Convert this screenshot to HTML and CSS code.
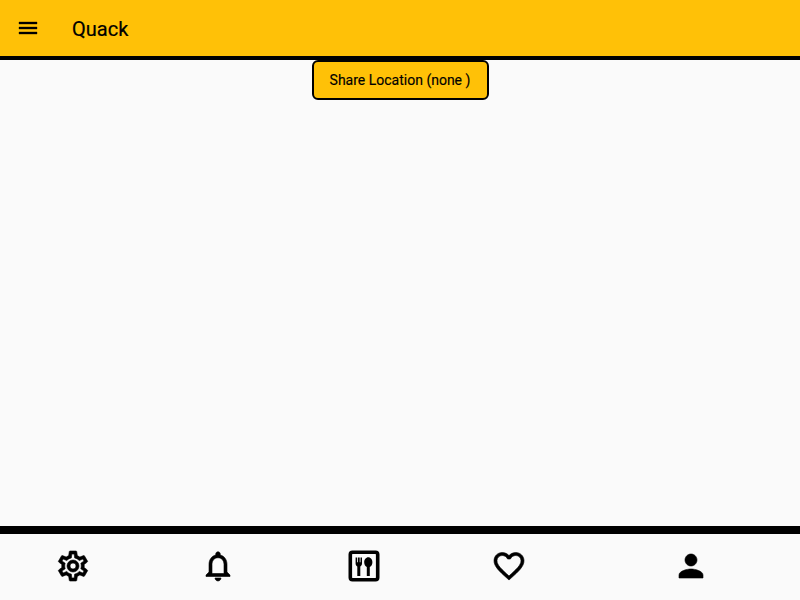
FILE: index.html
```
<!DOCTYPE html>
<html lang="en">
<head>
<meta charset="utf-8">
<title>Quack</title>
<link rel="stylesheet" href="styles.css">
</head>
<body>
<header class="toolbar">
  <svg class="menu" viewBox="0 0 24 24"><path d="M3 18h18v-2H3v2zm0-5h18v-2H3v2zm0-7v2h18V6H3z"/></svg>
  <h1 class="title">Quack</h1>
</header>
<main class="content">
  <button class="share">Share Location (none )</button>
</main>
<nav class="tabs">
  <a class="tab"><svg class="icon bold" viewBox="0 0 24 24"><path d="M12,8A4,4 0 0,1 16,12A4,4 0 0,1 12,16A4,4 0 0,1 8,12A4,4 0 0,1 12,8M12,10A2,2 0 0,0 10,12A2,2 0 0,0 12,14A2,2 0 0,0 14,12A2,2 0 0,0 12,10M10,22C9.75,22 9.54,21.82 9.5,21.58L9.13,18.93C8.5,18.68 7.96,18.34 7.44,17.94L4.95,18.95C4.73,19.03 4.46,18.95 4.34,18.73L2.34,15.27C2.21,15.05 2.27,14.78 2.46,14.63L4.57,12.97L4.5,12L4.57,11L2.46,9.37C2.27,9.22 2.21,8.95 2.34,8.73L4.34,5.27C4.46,5.05 4.73,4.96 4.95,5.05L7.44,6.05C7.96,5.66 8.5,5.32 9.13,5.07L9.5,2.42C9.54,2.18 9.75,2 10,2H14C14.25,2 14.46,2.18 14.5,2.42L14.87,5.07C15.5,5.32 16.04,5.66 16.56,6.05L19.05,5.05C19.27,4.96 19.54,5.05 19.66,5.27L21.66,8.73C21.79,8.95 21.73,9.22 21.54,9.37L19.43,11L19.5,12L19.43,13L21.54,14.63C21.73,14.78 21.79,15.05 21.66,15.27L19.66,18.73C19.54,18.95 19.27,19.04 19.05,18.95L16.56,17.95C16.04,18.34 15.5,18.68 14.87,18.93L14.5,21.58C14.46,21.82 14.25,22 14,22H10M11.25,4L10.88,6.61C9.68,6.86 8.62,7.5 7.85,8.39L5.44,7.35L4.69,8.65L6.8,10.2C6.4,11.37 6.4,12.64 6.8,13.8L4.68,15.36L5.43,16.66L7.86,15.62C8.63,16.5 9.68,17.14 10.87,17.38L11.24,20H12.76L13.13,17.39C14.32,17.14 15.37,16.5 16.14,15.62L18.57,16.66L19.32,15.36L17.2,13.81C17.6,12.64 17.6,11.37 17.2,10.2L19.31,8.65L18.56,7.35L16.15,8.39C15.38,7.5 14.32,6.86 13.12,6.62L12.75,4H11.25Z"/></svg></a>
  <a class="tab"><svg class="icon bold" viewBox="0 0 24 24"><path d="M12 22c1.1 0 2-.9 2-2h-4c0 1.1.9 2 2 2zm6-6v-5c0-3.07-1.63-5.64-4.5-6.32V4c0-.83-.67-1.5-1.5-1.5s-1.5.67-1.5 1.5v.68C7.64 5.36 6 7.92 6 11v5l-2 2v1h16v-1l-2-2zm-2 1H8v-6c0-2.48 1.51-4.5 4-4.5s4 2.02 4 4.5v6z"/></svg></a>
  <a class="tab"><svg class="icon" viewBox="0 0 36 36"><rect x="4.3" y="4.300" width="27.400" height="27.400" rx="2.200" fill="none" stroke="#000" stroke-width="3.600"/><path d="M9.600 9.500h1.500v4.800h.8V9.500h1.800v4.800h.8V9.500H16v6c0 1.500-.7 2.500-1.700 2.900V28h-3v-9.600c-1-.4-1.700-1.400-1.700-2.900z"/><path d="M22.300 9.200c2.400 0 4.100 2.300 4.100 5.100 0 2.300-1 4-2.600 4.700v9h-3v-9c-1.600-.7-2.600-2.400-2.600-4.700 0-2.800 1.700-5.100 4.100-5.100z"/></svg></a>
  <a class="tab"><svg class="icon bold" viewBox="0 0 24 24"><path d="M12.1,18.55L12,18.65L11.89,18.55C7.14,14.24 4,11.39 4,8.5C4,6.5 5.5,5 7.5,5C9.04,5 10.54,6 11.07,7.36H12.93C13.46,6 14.96,5 16.5,5C18.5,5 20,6.5 20,8.5C20,11.39 16.86,14.24 12.1,18.55M16.5,3C14.76,3 13.09,3.81 12,5.08C10.91,3.81 9.24,3 7.5,3C4.42,3 2,5.41 2,8.5C2,12.27 5.4,15.36 10.55,20.03L12,21.35L13.45,20.03C18.6,15.36 22,12.27 22,8.5C22,5.41 19.58,3 16.5,3Z"/></svg></a>
  <a class="tab tab-wide"><svg class="icon bold" viewBox="0 0 24 24"><path d="M12 12c2.210 0 4-1.790 4-4s-1.790-4-4-4-4 1.790-4 4 1.790 4 4 4zm0 2c-2.670 0-8 1.340-8 4v2h16v-2c0-2.660-5.330-4-8-4z"/></svg></a>
</nav>
</body>
</html>
```
FILE: styles.css
```
* { box-sizing: border-box; }
body {
  margin: 0;
  height: 100vh;
  display: flex;
  flex-direction: column;
  background: #fafafa;
  color: #000;
  font-family: Roboto, sans-serif;
}
.toolbar {
  height: 60px;
  display: flex;
  align-items: center;
  gap: 32px;
  padding: 0 16px 1px;
  background: #ffc107;
  border-bottom: 4px solid #000;
}
.menu { width: 24px; height: 24px; stroke: #000; stroke-width: .35; }
.title {
  margin: 0;
  padding-top: 2px;
  font-size: 20px;
  font-weight: 400;
  line-height: 24px;
  -webkit-text-stroke: .2px #000;
}
.content { flex: 1; text-align: center; }
.share {
  display: block;
  width: 177px;
  margin: 0 auto;
  height: 40px;
  padding: 0;
  background: #ffc107;
  border: 2px solid #000;
  border-radius: 6px;
  color: #000;
  font: 400 14px/36px Roboto, sans-serif;
  -webkit-text-stroke: .15px #000;
}
.tabs {
  height: 74px;
  display: flex;
  border-top: 8px solid #000;
}
.tab {
  flex: 1;
  display: flex;
  justify-content: center;
  padding-top: 14px;
}
.tab-wide { flex: 1.5; }
.icon { width: 36px; height: 36px; }
.bold { stroke: #000; stroke-width: .4; }
```
